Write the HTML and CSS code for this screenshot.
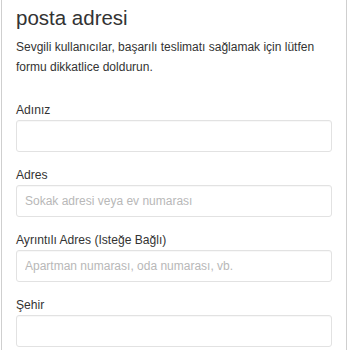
FILE: index.html
```html
<!DOCTYPE html>
<html lang="tr">
<head>
<meta charset="utf-8">
<link rel="stylesheet" href="styles.css">
</head>
<body>
<div class="card">
  <h1 class="title">posta adresi</h1>
  <p class="intro">Sevgili kullanıcılar, başarılı teslimatı sağlamak için lütfen formu dikkatlice doldurun.</p>
  <form class="form">
    <div class="field">
      <label class="label">Adınız</label>
      <input class="input" type="text">
    </div>
    <div class="field">
      <label class="label">Adres</label>
      <input class="input" type="text" placeholder="Sokak adresi veya ev numarası">
    </div>
    <div class="field">
      <label class="label">Ayrıntılı Adres (Isteğe Bağlı)</label>
      <input class="input" type="text" placeholder="Apartman numarası, oda numarası, vb.">
    </div>
    <div class="field">
      <label class="label">Şehir</label>
      <input class="input" type="text">
    </div>
  </form>
</div>
</body>
</html>
```
FILE: styles.css
```css
html, body {
  margin: 0;
  padding: 0;
  background: #fff;
}
body {
  font-family: "Liberation Sans", Arial, sans-serif;
  color: #333;
}
.card {
  box-sizing: border-box;
  margin-left: 1px;
  width: 346px;
  min-height: 350px;
  border-left: 1px solid #cfcfcf;
  border-right: 1px solid #cfcfcf;
  padding: 6px 14px 0 14px;
}
.title {
  margin: 0;
  font-size: 20.5px;
  line-height: 24px;
  font-weight: normal;
  color: #333;
}
.intro {
  margin: 7px 0 0 0;
  font-size: 12px;
  line-height: 20px;
  color: #333;
}
.form {
  margin-top: 26px;
  display: flex;
  flex-direction: column;
  gap: 16px;
}
.field {
  display: flex;
  flex-direction: column;
  gap: 2px;
}
.label {
  font-size: 12.1px;
  line-height: 15px;
  color: #333;
}
.input {
  box-sizing: border-box;
  height: 32px;
  width: 100%;
  margin: 0;
  border: 1px solid #e2e2e2;
  border-radius: 3px;
  box-shadow: inset 0 1px 1px rgba(0,0,0,0.03);
  padding: 0 8px;
  font-family: "Liberation Sans", Arial, sans-serif;
  font-size: 12px;
  color: #333;
  background: #fff;
  outline: none;
}
.input::placeholder {
  color: #b8b8b8;
}
```
